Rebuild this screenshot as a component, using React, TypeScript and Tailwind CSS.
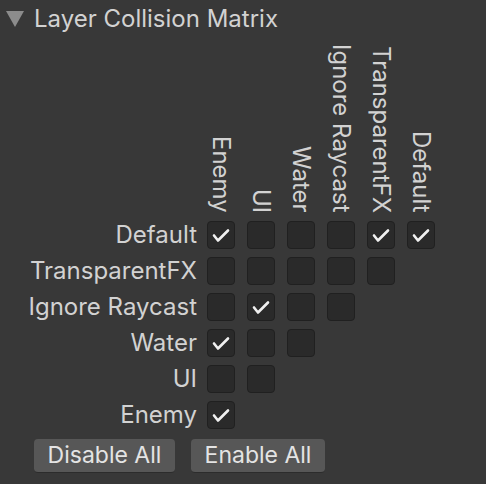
const columns = ["Enemy", "UI", "Water", "Ignore Raycast", "TransparentFX", "Default"];
const rows = ["Default", "TransparentFX", "Ignore Raycast", "Water", "UI", "Enemy"];

// checked[row][col]
const checked: Record<string, number[]> = {
  Default: [0, 4, 5],
  "Ignore Raycast": [1],
  Water: [0],
  Enemy: [0],
};

const Check = ({ on }: { on: boolean }) => (
  <div className="w-[28px] h-[28px] rounded-[4px] bg-[#2a2a2a] border border-[#202020] flex items-center justify-center">
    {on && (
      <svg width="28" height="28" viewBox="0 0 28 28" className="-m-px">
        <path
          d="M7 14.5 L11 19.5 L21 9.5"
          fill="none"
          stroke="#f0f0f0"
          strokeWidth="2.6"
          strokeLinecap="round"
          strokeLinejoin="round"
        />
      </svg>
    )}
  </div>
);

export default function App() {
  return (
    <div className="w-[486px] h-[484px] bg-[#383838] text-[#d2d2d2] font-['Inter',sans-serif] overflow-hidden">
      <div className="h-[38px] flex items-center pl-[6px]">
        <svg width="18" height="16" viewBox="0 0 18 16">
          <path d="M0 0 H18 L9 16 Z" fill="#8c8c8c" />
        </svg>
        <span className="ml-[10px] text-[24px] leading-none">Layer Collision Matrix</span>
      </div>

      <div className="h-[175px] flex items-end pl-[207px] gap-[12px]">
        {columns.map((c) => (
          <div key={c} className="w-[28px] flex justify-center">
            <span className="[writing-mode:vertical-rl] text-[24px] leading-[26px]">{c}</span>
          </div>
        ))}
      </div>

      <div className="mt-[8px] flex flex-col gap-[8px]">
        {rows.map((r, i) => (
          <div key={r} className="h-[28px] flex items-center">
            <div className="w-[197px] text-right text-[24px] leading-none">{r}</div>
            <div className="ml-[10px] flex gap-[12px]">
              {columns.slice(0, 6 - i).map((_, j) => (
                <Check key={j} on={(checked[r] ?? []).includes(j)} />
              ))}
            </div>
          </div>
        ))}
      </div>

      <div className="mt-[10px] pl-[34px] flex gap-[16px]">
        <button className="w-[141px] h-[34px] rounded-[4px] bg-[#575757] border-b border-[#2c2c2c] text-[23px] leading-none text-[#e4e4e4]">
          Disable All
        </button>
        <button className="w-[134px] h-[34px] rounded-[4px] bg-[#575757] border-b border-[#2c2c2c] text-[23px] leading-none text-[#e4e4e4]">
          Enable All
        </button>
      </div>
    </div>
  );
}
